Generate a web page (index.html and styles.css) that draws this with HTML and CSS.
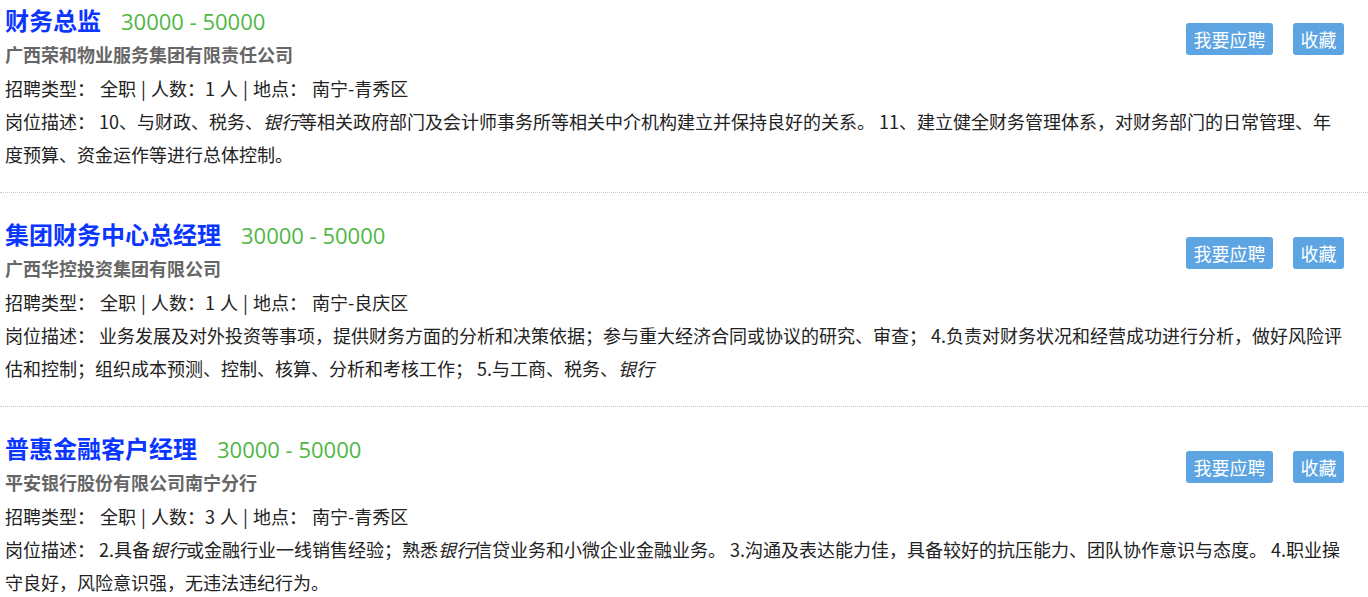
FILE: index.html
```html
<!DOCTYPE html>
<html lang="zh-CN">
<head>
<meta charset="utf-8">
<title>职位列表</title>
<link rel="stylesheet" href="styles.css">
</head>
<body>
<div class="job-list">
  <div class="job">
    <div class="actions">
      <a class="btn">我要应聘</a>
      <a class="btn">收藏</a>
    </div>
    <div class="title-row"><span class="title">财务总监</span><span class="salary">30000 - 50000</span></div>
    <div class="company">广西荣和物业服务集团有限责任公司</div>
    <div class="info">招聘类型： 全职 | 人数：1 人 | 地点： 南宁-青秀区</div>
    <div class="desc">岗位描述： 10、与财政、税务、<em>银行</em>等相关政府部门及会计师事务所等相关中介机构建立并保持良好的关系。 11、建立健全财务管理体系，对财务部门的日常管理、年度预算、资金运作等进行总体控制。</div>
  </div>
  <div class="job">
    <div class="actions">
      <a class="btn">我要应聘</a>
      <a class="btn">收藏</a>
    </div>
    <div class="title-row"><span class="title">集团财务中心总经理</span><span class="salary">30000 - 50000</span></div>
    <div class="company">广西华控投资集团有限公司</div>
    <div class="info">招聘类型： 全职 | 人数：1 人 | 地点： 南宁-良庆区</div>
    <div class="desc">岗位描述： 业务发展及对外投资等事项，提供财务方面的分析和决策依据；参与重大经济合同或协议的研究、审查； 4.负责对财务状况和经营成功进行分析，做好风险评估和控制；组织成本预测、控制、核算、分析和考核工作； 5.与工商、税务、<em>银行</em></div>
  </div>
  <div class="job">
    <div class="actions">
      <a class="btn">我要应聘</a>
      <a class="btn">收藏</a>
    </div>
    <div class="title-row"><span class="title">普惠金融客户经理</span><span class="salary">30000 - 50000</span></div>
    <div class="company">平安银行股份有限公司南宁分行</div>
    <div class="info">招聘类型： 全职 | 人数：3 人 | 地点： 南宁-青秀区</div>
    <div class="desc">岗位描述： 2.具备<em>银行</em>或金融行业一线销售经验；熟悉<em>银行</em>信贷业务和小微企业金融业务。 3.沟通及表达能力佳，具备较好的抗压能力、团队协作意识与态度。 4.职业操守良好，风险意识强，无违法违纪行为。</div>
  </div>
</div>
</body>
</html>
```
FILE: styles.css
```css
html {
  overflow: hidden;
}
body {
  margin: 0;
  background: #fff;
  font-family: "Noto Sans CJK SC", sans-serif;
  color: #222;
  font-size: 18px;
}
.job {
  padding: 24px 24px 21px 5px;
  border-bottom: 1px dotted #c8c8c8;
}
.job:first-child {
  padding-top: 3px;
}
.actions {
  float: right;
  margin-top: 20px;
  display: flex;
  gap: 20px;
}
.btn {
  display: block;
  height: 32px;
  line-height: 32px;
  padding: 0 7.5px;
  background: #5ca5e2;
  color: #fff;
  font-size: 18px;
  border-radius: 3px;
}
.title-row {
  height: 34px;
  line-height: 34px;
  white-space: nowrap;
}
.title {
  font-size: 24px;
  font-weight: bold;
  color: #0a36ff;
}
.salary {
  margin-left: 20px;
  font-family: "Open Sans", "Noto Sans CJK SC", sans-serif;
  font-size: 22px;
  color: #4fb744;
}
.company {
  line-height: 34px;
  font-size: 18px;
  font-weight: bold;
  color: #666;
}
.info {
  line-height: 34px;
  word-spacing: 1px;
}
.desc {
  line-height: 33px;
}
.desc em {
  font-style: italic;
}
```
